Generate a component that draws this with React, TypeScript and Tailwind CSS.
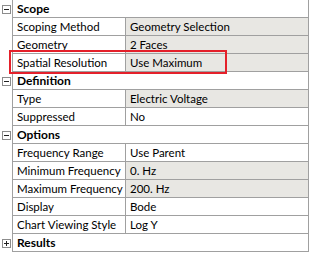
type Row = {
  label: string
  value?: string
  header?: boolean
  open?: boolean
  shaded?: boolean
}

const rows: Row[] = [
  { label: "Scope", header: true, open: true },
  { label: "Scoping Method", value: "Geometry Selection", shaded: true },
  { label: "Geometry", value: "2 Faces", shaded: true },
  { label: "Spatial Resolution", value: "Use Maximum", shaded: true },
  { label: "Definition", header: true, open: true },
  { label: "Type", value: "Electric Voltage", shaded: true },
  { label: "Suppressed", value: "No" },
  { label: "Options", header: true, open: true },
  { label: "Frequency Range", value: "Use Parent" },
  { label: "Minimum Frequency", value: "0. Hz", shaded: true },
  { label: "Maximum Frequency", value: "200. Hz", shaded: true },
  { label: "Display", value: "Bode" },
  { label: "Chart Viewing Style", value: "Log Y" },
  { label: "Results", header: true, open: false },
]

function Toggle({ open }: { open: boolean }) {
  return (
    <svg width="9" height="9" viewBox="0 0 9 9" className="block">
      <rect x="0.5" y="0.5" width="8" height="8" fill="#fff" stroke="#8c8c8c" />
      <line x1="2" y1="4.5" x2="7" y2="4.5" stroke="#222" />
      {!open && <line x1="4.5" y1="2" x2="4.5" y2="7" stroke="#222" />}
    </svg>
  )
}

export default function App() {
  return (
    <div
      className="relative h-[255px] w-[310px] overflow-hidden bg-white text-[11.5px] text-black"
      style={{ fontFamily: 'Lato, "Noto Sans", sans-serif' }}
    >
      <div className="flex w-[309px] flex-col">
        {rows.map(row => (
          <div key={row.label} className="flex h-[18px]">
            <div className="flex w-[13px] shrink-0 items-center border-r border-[#a0a0a0] pl-[2px]">
              {row.header && <Toggle open={!!row.open} />}
            </div>
            {row.header ? (
              <div className="flex flex-1 items-center border-b border-r border-[#a0a0a0] pl-[4px] pt-px text-[12px] font-bold leading-none">
                {row.label}
              </div>
            ) : (
              <>
                <div className="flex w-[113px] shrink-0 items-center border-b border-r border-[#a0a0a0] pl-[4px] pt-px leading-none whitespace-nowrap">
                  {row.label}
                </div>
                <div
                  className={`flex flex-1 items-center border-b border-r border-[#a0a0a0] pl-[4px] pt-px leading-none whitespace-nowrap ${
                    row.shaded ? "bg-[#e8e7e3]" : "bg-white"
                  }`}
                >
                  {row.value}
                </div>
              </>
            )}
          </div>
        ))}
      </div>
      <div className="absolute left-[9px] top-[50px] h-[24px] w-[218px] border-2 border-[#e4202a]" />
    </div>
  )
}
